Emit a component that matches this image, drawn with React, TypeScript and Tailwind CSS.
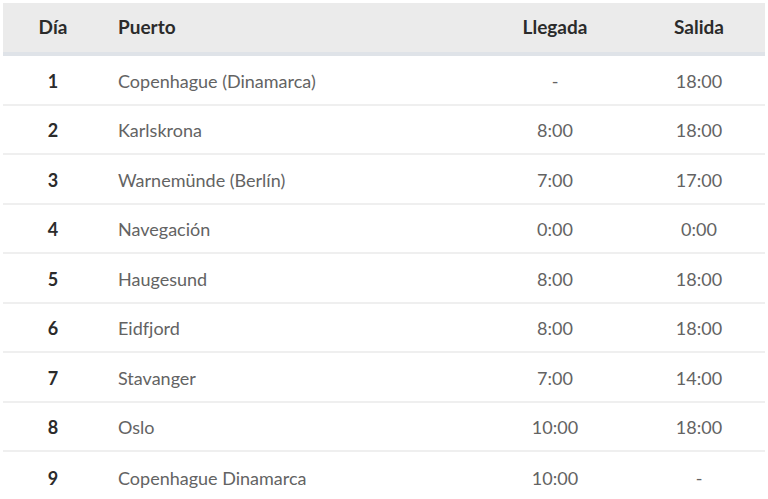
const rows: [string, string, string, string][] = [
  ["1", "Copenhague (Dinamarca)", "-", "18:00"],
  ["2", "Karlskrona", "8:00", "18:00"],
  ["3", "Warnemünde (Berlín)", "7:00", "17:00"],
  ["4", "Navegación", "0:00", "0:00"],
  ["5", "Haugesund", "8:00", "18:00"],
  ["6", "Eidfjord", "8:00", "18:00"],
  ["7", "Stavanger", "7:00", "14:00"],
  ["8", "Oslo", "10:00", "18:00"],
  ["9", "Copenhague Dinamarca", "10:00", "-"],
];

export default function App() {
  return (
    <div className="w-[768px] h-[499px] bg-white overflow-hidden pt-[3px] pl-[3px] pr-[3px]" style={{ fontFamily: "Lato, 'Open Sans', sans-serif" }}>
      <div className="flex flex-col">
        <div className="flex items-center h-[53px] bg-[#ebebeb] border-b-4 border-[#dfe3e8] text-[19px] font-bold text-[#2b2b2b]">
          <div className="w-[100px] text-center">Día</div>
          <div className="flex-1 pl-[15px]">Puerto</div>
          <div className="w-[156px] text-center">Llegada</div>
          <div className="w-[132px] text-center">Salida</div>
        </div>
        {rows.map((r, i) => (
          <div key={i} className={`flex items-center pt-[3px] h-[49.5px] text-[18px] ${i < rows.length - 1 ? "border-b-2 border-[#efefef]" : ""}`} style={{ fontVariantLigatures: "none" }}>
            <div className="w-[100px] text-center font-bold text-[#2b2b2b]">{r[0]}</div>
            <div className="flex-1 pl-[15px] text-[#636363]">{r[1]}</div>
            <div className="w-[156px] text-center text-[#636363]">{r[2]}</div>
            <div className="w-[132px] text-center text-[#636363]">{r[3]}</div>
          </div>
        ))}
      </div>
    </div>
  );
}
